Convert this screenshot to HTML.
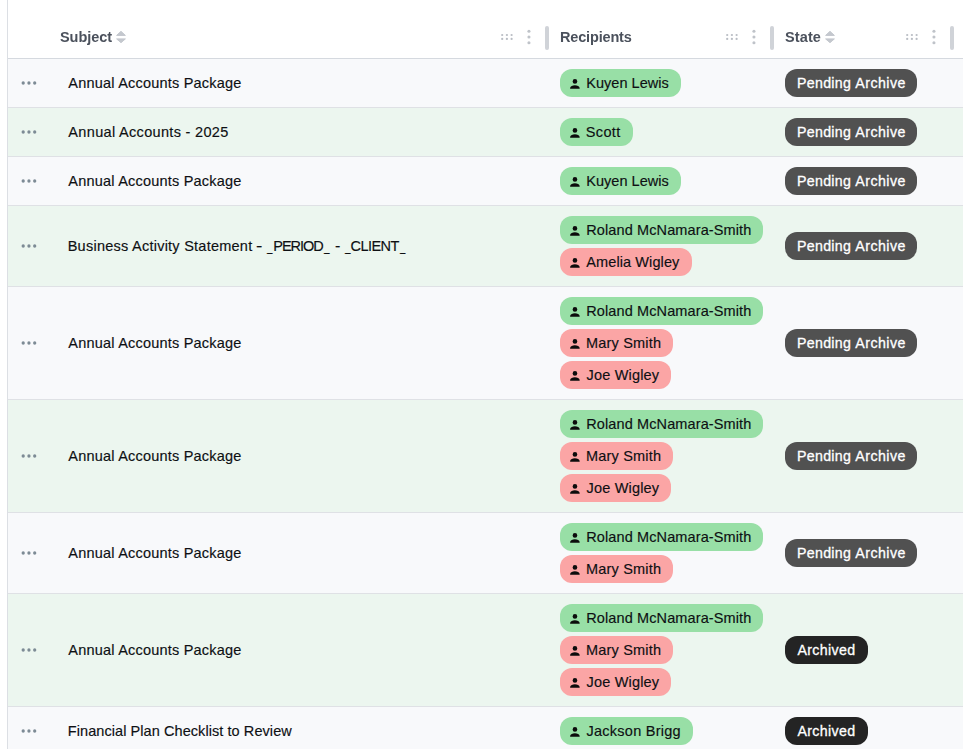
<!DOCTYPE html><html lang="en"><head><meta charset="utf-8"><title>Documents</title><style>
*{box-sizing:border-box;margin:0;padding:0}
html,body{width:963px;height:749px;overflow:hidden;background:#fff}
body{font-family:"Liberation Sans",Arial,sans-serif;font-size:14.5px;color:#111;position:relative}
.tbl{position:absolute;left:7px;top:0;width:956px;height:749px;border-left:1px solid #dcdfe4}
.hdr{position:absolute;left:0;top:0;width:955px;height:59px;border-bottom:1px solid #d5d9df;background:#fff}
.hdr .t{will-change:transform;top:28px;height:18px;line-height:18px;font-weight:700;font-size:14.5px;color:#4b515c}
.ico{position:absolute;left:-8px;top:0;width:963px;height:59px}
.t{position:absolute;white-space:nowrap;transform-origin:0 50%}
.row{position:absolute;left:0;width:955px;border-bottom:1px solid #dfe1e5}
.row.o{background:#f8f9fb}
.row.e{background:#ecf6ef}
.dots{position:absolute;left:13px;width:16px;height:4px;fill:#7d8b95}
.row .t{height:20px;line-height:20px;color:#0e1013;-webkit-text-stroke:0.15px #0e1013}
.chip{position:absolute;left:552px;height:28px;border-radius:12px}
.chip.g{background:#98dfa6}
.chip.r{background:#fba5a5}
.u{position:absolute;left:10px;top:10px;width:10px;height:10px;fill:#0c0c0c}
.st{position:absolute;left:777px;height:28px;border-radius:12px}
.st.p{background:#515151;width:132px}
.st.a{background:#242424;width:83px}
.row .t.w{font-size:14.2px;color:#fff;-webkit-text-stroke:0.3px #fff}
</style></head><body><div class="tbl">
<div class="hdr">
<span class="t" style="left:51.91px;letter-spacing:-0.050px">Subject</span> <span class="t" style="left:552.26px;letter-spacing:-0.166px">Recipients</span> <span class="t" style="left:776.58px;letter-spacing:0.114px">State</span>
<svg class="ico" viewBox="0 0 963 59"><g fill="#c4c8ce" stroke="#c4c8ce" stroke-width="1" stroke-linejoin="round"><path d="M121 31.3 L125.4 35.4 H116.6Z"/><path d="M121 42.7 L125.4 38.9 H116.6Z"/></g><g fill="#c4c8ce" stroke="#c4c8ce" stroke-width="1" stroke-linejoin="round"><path d="M830 31.3 L834.4 35.4 H825.6Z"/><path d="M830 42.7 L834.4 38.9 H825.6Z"/></g><g fill="#b9bdc4"><circle cx="502.2" cy="35.0" r="1.12"/><circle cx="502.2" cy="38.9" r="1.12"/><circle cx="506.9" cy="35.0" r="1.12"/><circle cx="506.9" cy="38.9" r="1.12"/><circle cx="511.6" cy="35.0" r="1.12"/><circle cx="511.6" cy="38.9" r="1.12"/></g><g fill="#bfc3c9"><circle cx="528.96" cy="31.2" r="1.55"/><circle cx="528.96" cy="36.95" r="1.55"/><circle cx="528.96" cy="42.7" r="1.55"/></g><rect x="545" y="26" width="4" height="24" rx="2" fill="#d0d3d8"/><g fill="#b9bdc4"><circle cx="727.2" cy="35.0" r="1.12"/><circle cx="727.2" cy="38.9" r="1.12"/><circle cx="731.9" cy="35.0" r="1.12"/><circle cx="731.9" cy="38.9" r="1.12"/><circle cx="736.6" cy="35.0" r="1.12"/><circle cx="736.6" cy="38.9" r="1.12"/></g><g fill="#bfc3c9"><circle cx="753.96" cy="31.2" r="1.55"/><circle cx="753.96" cy="36.95" r="1.55"/><circle cx="753.96" cy="42.7" r="1.55"/></g><rect x="770" y="26" width="4" height="24" rx="2" fill="#d0d3d8"/><g fill="#b9bdc4"><circle cx="907.2" cy="35.0" r="1.12"/><circle cx="907.2" cy="38.9" r="1.12"/><circle cx="911.9" cy="35.0" r="1.12"/><circle cx="911.9" cy="38.9" r="1.12"/><circle cx="916.6" cy="35.0" r="1.12"/><circle cx="916.6" cy="38.9" r="1.12"/></g><g fill="#bfc3c9"><circle cx="933.96" cy="31.2" r="1.55"/><circle cx="933.96" cy="36.95" r="1.55"/><circle cx="933.96" cy="42.7" r="1.55"/></g><rect x="950" y="26" width="4" height="24" rx="2" fill="#d0d3d8"/></svg>
</div>
<div class="row o" style="top:59px;height:49px">
<svg class="dots" style="top:22.35px" viewBox="0 0 16 4"><circle cx="2.2" cy="2" r="1.65"/><circle cx="7.95" cy="2" r="1.65"/><circle cx="13.7" cy="2" r="1.65"/></svg>
<div style="position:absolute;left:0;top:14.0px"><span class="t" style="left:60.34px;letter-spacing:0.204px">Annual Accounts Package</span></div>
<span class="chip g" style="top:10px;width:121px"><svg class="u" viewBox="0 0 10 10"><circle cx="4.95" cy="2.4" r="2.3"/><path d="M0.45 9.8 C0.05 9.8 0 9.45 0.1 9.05 C0.6 7.2 2.4 6.2 4.9 6.2 S9.2 7.2 9.7 9.05 C9.8 9.45 9.75 9.8 9.35 9.8 Z"/></svg></span>
<div style="position:absolute;left:0;top:14px"><span class="t" style="left:578.17px;letter-spacing:0.049px">Kuyen Lewis</span></div>
<span class="st p" style="top:10.0px"></span>
<div style="position:absolute;left:0;top:14.0px"><span class="t w" style="left:788.99px;letter-spacing:0.300px">Pending</span> <span class="t w" style="left:847.24px;letter-spacing:0.477px">Archive</span></div>
</div>
<div class="row e" style="top:108px;height:49px">
<svg class="dots" style="top:22.35px" viewBox="0 0 16 4"><circle cx="2.2" cy="2" r="1.65"/><circle cx="7.95" cy="2" r="1.65"/><circle cx="13.7" cy="2" r="1.65"/></svg>
<div style="position:absolute;left:0;top:14.0px"><span class="t" style="left:60.37px;letter-spacing:0.324px">Annual Accounts - 2025</span></div>
<span class="chip g" style="top:10px;width:73px"><svg class="u" viewBox="0 0 10 10"><circle cx="4.95" cy="2.4" r="2.3"/><path d="M0.45 9.8 C0.05 9.8 0 9.45 0.1 9.05 C0.6 7.2 2.4 6.2 4.9 6.2 S9.2 7.2 9.7 9.05 C9.8 9.45 9.75 9.8 9.35 9.8 Z"/></svg></span>
<div style="position:absolute;left:0;top:14px"><span class="t" style="left:577.87px;letter-spacing:0.321px">Scott</span></div>
<span class="st p" style="top:10.0px"></span>
<div style="position:absolute;left:0;top:14.0px"><span class="t w" style="left:788.99px;letter-spacing:0.300px">Pending</span> <span class="t w" style="left:847.24px;letter-spacing:0.477px">Archive</span></div>
</div>
<div class="row o" style="top:157px;height:49px">
<svg class="dots" style="top:22.35px" viewBox="0 0 16 4"><circle cx="2.2" cy="2" r="1.65"/><circle cx="7.95" cy="2" r="1.65"/><circle cx="13.7" cy="2" r="1.65"/></svg>
<div style="position:absolute;left:0;top:14.0px"><span class="t" style="left:60.34px;letter-spacing:0.204px">Annual Accounts Package</span></div>
<span class="chip g" style="top:10px;width:121px"><svg class="u" viewBox="0 0 10 10"><circle cx="4.95" cy="2.4" r="2.3"/><path d="M0.45 9.8 C0.05 9.8 0 9.45 0.1 9.05 C0.6 7.2 2.4 6.2 4.9 6.2 S9.2 7.2 9.7 9.05 C9.8 9.45 9.75 9.8 9.35 9.8 Z"/></svg></span>
<div style="position:absolute;left:0;top:14px"><span class="t" style="left:578.17px;letter-spacing:0.049px">Kuyen Lewis</span></div>
<span class="st p" style="top:10.0px"></span>
<div style="position:absolute;left:0;top:14.0px"><span class="t w" style="left:788.99px;letter-spacing:0.300px">Pending</span> <span class="t w" style="left:847.24px;letter-spacing:0.477px">Archive</span></div>
</div>
<div class="row e" style="top:206px;height:81px">
<svg class="dots" style="top:38.35px" viewBox="0 0 16 4"><circle cx="2.2" cy="2" r="1.65"/><circle cx="7.95" cy="2" r="1.65"/><circle cx="13.7" cy="2" r="1.65"/></svg>
<div style="position:absolute;left:0;top:30.0px"><span class="t" style="left:59.71px;letter-spacing:0.246px">Business Activity Statement</span> <span class="t" style="left:248.46px;letter-spacing:0.000px;transform:scaleX(1.313)">-</span> <span class="t" style="left:259.30px;letter-spacing:0.000px;transform:scaleX(0.677)">_</span><span class="t" style="left:265.27px;letter-spacing:-1.007px">PERIOD</span><span class="t" style="left:316.03px;letter-spacing:0.000px;transform:scaleX(0.688)">_</span> <span class="t" style="left:326.66px;letter-spacing:0.000px;transform:scaleX(1.106)">-</span> <span class="t" style="left:336.97px;letter-spacing:0.000px;transform:scaleX(0.688)">_</span><span class="t" style="left:342.53px;letter-spacing:-0.548px">CLIENT</span><span class="t" style="left:391.90px;letter-spacing:0.000px;transform:scaleX(0.666)">_</span></div>
<span class="chip g" style="top:10px;width:203px"><svg class="u" viewBox="0 0 10 10"><circle cx="4.95" cy="2.4" r="2.3"/><path d="M0.45 9.8 C0.05 9.8 0 9.45 0.1 9.05 C0.6 7.2 2.4 6.2 4.9 6.2 S9.2 7.2 9.7 9.05 C9.8 9.45 9.75 9.8 9.35 9.8 Z"/></svg></span>
<div style="position:absolute;left:0;top:14px"><span class="t" style="left:578.19px;letter-spacing:0.118px">Roland McNamara-Smith</span></div>
<span class="chip r" style="top:42px;width:132px"><svg class="u" viewBox="0 0 10 10"><circle cx="4.95" cy="2.4" r="2.3"/><path d="M0.45 9.8 C0.05 9.8 0 9.45 0.1 9.05 C0.6 7.2 2.4 6.2 4.9 6.2 S9.2 7.2 9.7 9.05 C9.8 9.45 9.75 9.8 9.35 9.8 Z"/></svg></span>
<div style="position:absolute;left:0;top:46px"><span class="t" style="left:578.30px;letter-spacing:0.096px">Amelia Wigley</span></div>
<span class="st p" style="top:26.0px"></span>
<div style="position:absolute;left:0;top:30.0px"><span class="t w" style="left:788.99px;letter-spacing:0.300px">Pending</span> <span class="t w" style="left:847.24px;letter-spacing:0.477px">Archive</span></div>
</div>
<div class="row o" style="top:287px;height:113px">
<svg class="dots" style="top:54.35px" viewBox="0 0 16 4"><circle cx="2.2" cy="2" r="1.65"/><circle cx="7.95" cy="2" r="1.65"/><circle cx="13.7" cy="2" r="1.65"/></svg>
<div style="position:absolute;left:0;top:46.0px"><span class="t" style="left:60.34px;letter-spacing:0.204px">Annual Accounts Package</span></div>
<span class="chip g" style="top:10px;width:203px"><svg class="u" viewBox="0 0 10 10"><circle cx="4.95" cy="2.4" r="2.3"/><path d="M0.45 9.8 C0.05 9.8 0 9.45 0.1 9.05 C0.6 7.2 2.4 6.2 4.9 6.2 S9.2 7.2 9.7 9.05 C9.8 9.45 9.75 9.8 9.35 9.8 Z"/></svg></span>
<div style="position:absolute;left:0;top:14px"><span class="t" style="left:578.19px;letter-spacing:0.118px">Roland McNamara-Smith</span></div>
<span class="chip r" style="top:42px;width:113px"><svg class="u" viewBox="0 0 10 10"><circle cx="4.95" cy="2.4" r="2.3"/><path d="M0.45 9.8 C0.05 9.8 0 9.45 0.1 9.05 C0.6 7.2 2.4 6.2 4.9 6.2 S9.2 7.2 9.7 9.05 C9.8 9.45 9.75 9.8 9.35 9.8 Z"/></svg></span>
<div style="position:absolute;left:0;top:46px"><span class="t" style="left:577.93px;letter-spacing:0.203px">Mary Smith</span></div>
<span class="chip r" style="top:74px;width:111px"><svg class="u" viewBox="0 0 10 10"><circle cx="4.95" cy="2.4" r="2.3"/><path d="M0.45 9.8 C0.05 9.8 0 9.45 0.1 9.05 C0.6 7.2 2.4 6.2 4.9 6.2 S9.2 7.2 9.7 9.05 C9.8 9.45 9.75 9.8 9.35 9.8 Z"/></svg></span>
<div style="position:absolute;left:0;top:78px"><span class="t" style="left:578.58px;letter-spacing:0.168px">Joe Wigley</span></div>
<span class="st p" style="top:42.0px"></span>
<div style="position:absolute;left:0;top:46.0px"><span class="t w" style="left:788.99px;letter-spacing:0.300px">Pending</span> <span class="t w" style="left:847.24px;letter-spacing:0.477px">Archive</span></div>
</div>
<div class="row e" style="top:400px;height:113px">
<svg class="dots" style="top:54.35px" viewBox="0 0 16 4"><circle cx="2.2" cy="2" r="1.65"/><circle cx="7.95" cy="2" r="1.65"/><circle cx="13.7" cy="2" r="1.65"/></svg>
<div style="position:absolute;left:0;top:46.0px"><span class="t" style="left:60.34px;letter-spacing:0.204px">Annual Accounts Package</span></div>
<span class="chip g" style="top:10px;width:203px"><svg class="u" viewBox="0 0 10 10"><circle cx="4.95" cy="2.4" r="2.3"/><path d="M0.45 9.8 C0.05 9.8 0 9.45 0.1 9.05 C0.6 7.2 2.4 6.2 4.9 6.2 S9.2 7.2 9.7 9.05 C9.8 9.45 9.75 9.8 9.35 9.8 Z"/></svg></span>
<div style="position:absolute;left:0;top:14px"><span class="t" style="left:578.19px;letter-spacing:0.118px">Roland McNamara-Smith</span></div>
<span class="chip r" style="top:42px;width:113px"><svg class="u" viewBox="0 0 10 10"><circle cx="4.95" cy="2.4" r="2.3"/><path d="M0.45 9.8 C0.05 9.8 0 9.45 0.1 9.05 C0.6 7.2 2.4 6.2 4.9 6.2 S9.2 7.2 9.7 9.05 C9.8 9.45 9.75 9.8 9.35 9.8 Z"/></svg></span>
<div style="position:absolute;left:0;top:46px"><span class="t" style="left:577.93px;letter-spacing:0.203px">Mary Smith</span></div>
<span class="chip r" style="top:74px;width:111px"><svg class="u" viewBox="0 0 10 10"><circle cx="4.95" cy="2.4" r="2.3"/><path d="M0.45 9.8 C0.05 9.8 0 9.45 0.1 9.05 C0.6 7.2 2.4 6.2 4.9 6.2 S9.2 7.2 9.7 9.05 C9.8 9.45 9.75 9.8 9.35 9.8 Z"/></svg></span>
<div style="position:absolute;left:0;top:78px"><span class="t" style="left:578.58px;letter-spacing:0.168px">Joe Wigley</span></div>
<span class="st p" style="top:42.0px"></span>
<div style="position:absolute;left:0;top:46.0px"><span class="t w" style="left:788.99px;letter-spacing:0.300px">Pending</span> <span class="t w" style="left:847.24px;letter-spacing:0.477px">Archive</span></div>
</div>
<div class="row o" style="top:513px;height:81px">
<svg class="dots" style="top:38.35px" viewBox="0 0 16 4"><circle cx="2.2" cy="2" r="1.65"/><circle cx="7.95" cy="2" r="1.65"/><circle cx="13.7" cy="2" r="1.65"/></svg>
<div style="position:absolute;left:0;top:30.0px"><span class="t" style="left:60.34px;letter-spacing:0.204px">Annual Accounts Package</span></div>
<span class="chip g" style="top:10px;width:203px"><svg class="u" viewBox="0 0 10 10"><circle cx="4.95" cy="2.4" r="2.3"/><path d="M0.45 9.8 C0.05 9.8 0 9.45 0.1 9.05 C0.6 7.2 2.4 6.2 4.9 6.2 S9.2 7.2 9.7 9.05 C9.8 9.45 9.75 9.8 9.35 9.8 Z"/></svg></span>
<div style="position:absolute;left:0;top:14px"><span class="t" style="left:578.19px;letter-spacing:0.118px">Roland McNamara-Smith</span></div>
<span class="chip r" style="top:42px;width:113px"><svg class="u" viewBox="0 0 10 10"><circle cx="4.95" cy="2.4" r="2.3"/><path d="M0.45 9.8 C0.05 9.8 0 9.45 0.1 9.05 C0.6 7.2 2.4 6.2 4.9 6.2 S9.2 7.2 9.7 9.05 C9.8 9.45 9.75 9.8 9.35 9.8 Z"/></svg></span>
<div style="position:absolute;left:0;top:46px"><span class="t" style="left:577.93px;letter-spacing:0.203px">Mary Smith</span></div>
<span class="st p" style="top:26.0px"></span>
<div style="position:absolute;left:0;top:30.0px"><span class="t w" style="left:788.99px;letter-spacing:0.300px">Pending</span> <span class="t w" style="left:847.24px;letter-spacing:0.477px">Archive</span></div>
</div>
<div class="row e" style="top:594px;height:113px">
<svg class="dots" style="top:54.35px" viewBox="0 0 16 4"><circle cx="2.2" cy="2" r="1.65"/><circle cx="7.95" cy="2" r="1.65"/><circle cx="13.7" cy="2" r="1.65"/></svg>
<div style="position:absolute;left:0;top:46.0px"><span class="t" style="left:60.34px;letter-spacing:0.204px">Annual Accounts Package</span></div>
<span class="chip g" style="top:10px;width:203px"><svg class="u" viewBox="0 0 10 10"><circle cx="4.95" cy="2.4" r="2.3"/><path d="M0.45 9.8 C0.05 9.8 0 9.45 0.1 9.05 C0.6 7.2 2.4 6.2 4.9 6.2 S9.2 7.2 9.7 9.05 C9.8 9.45 9.75 9.8 9.35 9.8 Z"/></svg></span>
<div style="position:absolute;left:0;top:14px"><span class="t" style="left:578.19px;letter-spacing:0.118px">Roland McNamara-Smith</span></div>
<span class="chip r" style="top:42px;width:113px"><svg class="u" viewBox="0 0 10 10"><circle cx="4.95" cy="2.4" r="2.3"/><path d="M0.45 9.8 C0.05 9.8 0 9.45 0.1 9.05 C0.6 7.2 2.4 6.2 4.9 6.2 S9.2 7.2 9.7 9.05 C9.8 9.45 9.75 9.8 9.35 9.8 Z"/></svg></span>
<div style="position:absolute;left:0;top:46px"><span class="t" style="left:577.93px;letter-spacing:0.203px">Mary Smith</span></div>
<span class="chip r" style="top:74px;width:111px"><svg class="u" viewBox="0 0 10 10"><circle cx="4.95" cy="2.4" r="2.3"/><path d="M0.45 9.8 C0.05 9.8 0 9.45 0.1 9.05 C0.6 7.2 2.4 6.2 4.9 6.2 S9.2 7.2 9.7 9.05 C9.8 9.45 9.75 9.8 9.35 9.8 Z"/></svg></span>
<div style="position:absolute;left:0;top:78px"><span class="t" style="left:578.58px;letter-spacing:0.168px">Joe Wigley</span></div>
<span class="st a" style="top:42.0px"></span>
<div style="position:absolute;left:0;top:46.0px"><span class="t w" style="left:789.42px;letter-spacing:0.360px">Archived</span></div>
</div>
<div class="row o" style="top:707px;height:49px">
<svg class="dots" style="top:22.35px" viewBox="0 0 16 4"><circle cx="2.2" cy="2" r="1.65"/><circle cx="7.95" cy="2" r="1.65"/><circle cx="13.7" cy="2" r="1.65"/></svg>
<div style="position:absolute;left:0;top:14.0px"><span class="t" style="left:59.82px;letter-spacing:0.070px">Financial Plan Checklist to Review</span></div>
<span class="chip g" style="top:10px;width:133px"><svg class="u" viewBox="0 0 10 10"><circle cx="4.95" cy="2.4" r="2.3"/><path d="M0.45 9.8 C0.05 9.8 0 9.45 0.1 9.05 C0.6 7.2 2.4 6.2 4.9 6.2 S9.2 7.2 9.7 9.05 C9.8 9.45 9.75 9.8 9.35 9.8 Z"/></svg></span>
<div style="position:absolute;left:0;top:14px"><span class="t" style="left:578.49px;letter-spacing:0.254px">Jackson Brigg</span></div>
<span class="st a" style="top:10.0px"></span>
<div style="position:absolute;left:0;top:14.0px"><span class="t w" style="left:789.42px;letter-spacing:0.360px">Archived</span></div>
</div>
</div></body></html>
